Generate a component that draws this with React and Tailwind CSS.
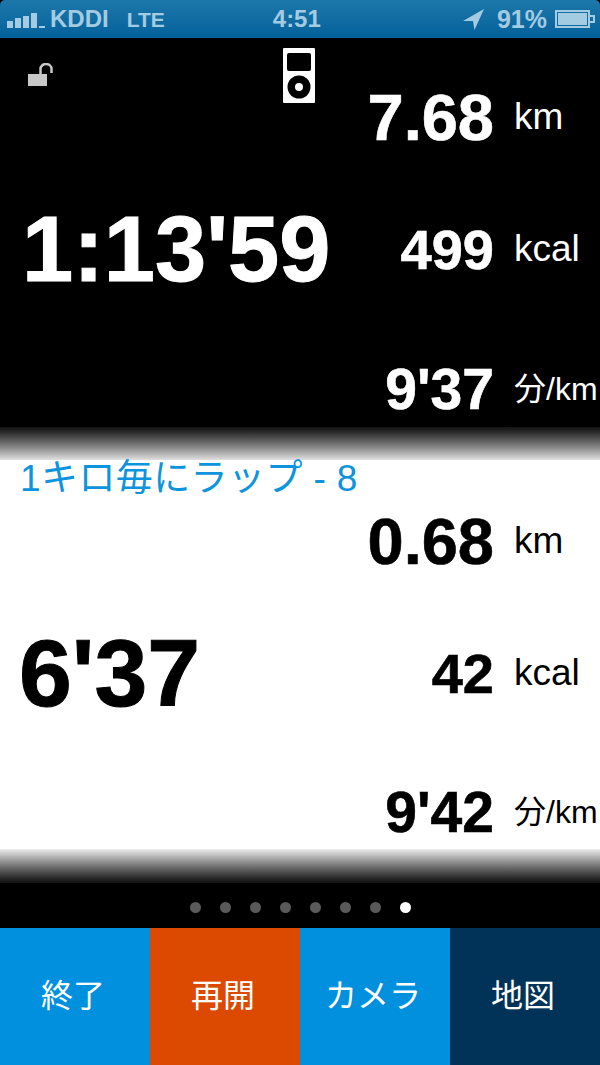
import React from 'react';

const ink = '#a3cbe2';

function Stat({ value, unit, size, unitSize, lead, className = '' }) {
    return (
        <div className={`flex items-center ${className}`}>
            <div className="w-[494px] flex items-center justify-between">
                {lead}
                <span className={`ml-auto font-bold leading-none [-webkit-text-stroke:0.6px_currentColor] ${size}`}>{value}</span>
            </div>
            <div className={`ml-5 pb-[2px] whitespace-nowrap leading-none ${unitSize}`}>{unit}</div>
        </div>
    );
}

function StatusBar() {
    return (
        <div className="h-[38px] rounded-t-[5px] bg-gradient-to-b from-[#1c77aa] to-[#03619a] flex items-center pl-[7px] pr-[5px] text-[#a3cbe2] font-bold leading-none">
            <div className="flex items-end gap-[2px] mt-[2px]">
                <span className="w-[6px] h-[7px] bg-[#a3cbe2]" />
                <span className="w-[6px] h-[10px] bg-[#a3cbe2]" />
                <span className="w-[6px] h-[12px] bg-[#a3cbe2]" />
                <span className="w-[6px] h-[15px] bg-[#a3cbe2]" />
                <span className="w-[6px] h-[2px] bg-[#a3cbe2]" />
            </div>
            <span className="ml-[5px] text-[24px]">KDDI</span>
            <span className="ml-[18px] text-[21px]">LTE</span>
            <span className="ml-[108px] text-[24px]">4:51</span>
            <div className="ml-auto flex items-center">
                <svg width="21" height="21" viewBox="0 0 21 21">
                    <path d="M21 0 L0 12 L10 12 L11.5 21 Z" fill={ink} />
                </svg>
                <span className="ml-[13px] text-[25px]">91%</span>
                <div className="ml-[8px] flex items-center">
                    <div className="w-[35px] h-[18px] border-2 border-[#a3cbe2] p-[1px]">
                        <div className="w-full h-full bg-[#a3cbe2]" />
                    </div>
                    <div className="w-[5px] h-[8px] border-2 border-l-0 border-[#a3cbe2]" />
                </div>
            </div>
        </div>
    );
}

export default function App() {
    return (
        <div className='w-[600px] h-[1065px] overflow-hidden flex flex-col bg-black font-["Liberation_Sans","Noto_Sans_CJK_JP",sans-serif]'>
            <StatusBar />

            <section className="relative h-[389px] bg-black text-white flex flex-col">
                {/* lock */}
                <svg className="absolute left-[27px] top-[25px]" width="28" height="24" viewBox="0 0 28 24">
                    <rect x="1" y="11" width="19" height="12" fill="#c8c8c8" />
                    <path d="M13.5 11 V6 a5.5 5 0 0 1 11 0 V10" fill="none" stroke="#c8c8c8" strokeWidth="2.5" />
                </svg>
                {/* ipod */}
                <svg className="absolute left-[283px] top-[10px]" width="32" height="55" viewBox="0 0 32 55">
                    <rect width="32" height="55" rx="1" fill="#fff" />
                    <rect x="4" y="5" width="24" height="18" rx="2" fill="#000" />
                    <circle cx="16" cy="39" r="11.5" fill="#000" />
                    <circle cx="16" cy="39" r="4" fill="#fff" />
                </svg>
                <Stat value="7.68" unit="km" size="text-[65px]" unitSize="text-[37px]" className="mt-[47px]" />
                <Stat
                    value="499"
                    unit="kcal"
                    size="text-[56px]"
                    unitSize="text-[37px]"
                    className="mt-[53px]"
                    lead={<span className="ml-[22px] mb-[1px] text-[92px] font-bold leading-none [-webkit-text-stroke:1px_currentColor]">1:13'59</span>}
                />
                <Stat value="9'37" unit="分/km" size="text-[57px]" unitSize="text-[32px]" className="mt-[65px]" />
            </section>

            <div className="h-[33px] bg-gradient-to-b from-[#111111] to-[#e0e0e0]" />

            <section className="h-[389px] bg-white text-black flex flex-col">
                <div className="pl-[20px] pt-[1px] text-[37px] leading-[36px] tracking-[0.4px] text-[#0d94dc] whitespace-nowrap">1キロ毎にラップ - 8</div>
                <Stat value="0.68" unit="km" size="text-[65px]" unitSize="text-[37px]" className="mt-[12px]" />
                <Stat
                    value="42"
                    unit="kcal"
                    size="text-[56px]"
                    unitSize="text-[37px]"
                    className="mt-[52px]"
                    lead={<span className="ml-[19px] text-[95px] font-bold leading-none [-webkit-text-stroke:1px_currentColor]">6'37</span>}
                />
                <Stat value="9'42" unit="分/km" size="text-[57px]" unitSize="text-[32px]" className="mt-[63px]" />
            </section>

            <div className="h-[34px] bg-gradient-to-b from-[#eeeeee] to-[#111111]" />

            <div className="h-[45px] pt-[3px] bg-black flex items-center justify-center gap-[19px]">
                {[0, 1, 2, 3, 4, 5, 6].map((i) => (
                    <span key={i} className="w-[11px] h-[11px] rounded-full bg-[#5a5a5a]" />
                ))}
                <span className="w-[11px] h-[11px] rounded-full bg-white" />
            </div>

            <nav className="flex-1 grid grid-cols-4 text-white text-[32px]">
                <div className="bg-[#0090de] flex items-center justify-center pr-1 pb-[2px]">終了</div>
                <div className="bg-[#dc4900] flex items-center justify-center pr-1 pb-[2px]">再開</div>
                <div className="bg-[#0090de] flex items-center justify-center pr-1 pb-[2px]">カメラ</div>
                <div className="bg-[#003357] flex items-center justify-center pr-1 pb-[2px]">地図</div>
            </nav>
        </div>
    );
}
